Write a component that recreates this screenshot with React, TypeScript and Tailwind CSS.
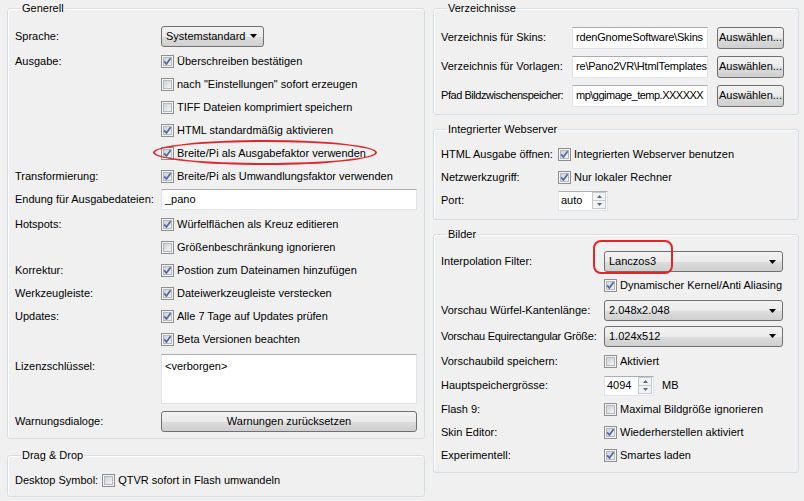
import type { ReactNode } from "react";

// Win7-style settings dialog (Pano2VR preferences)

function CheckBox({ checked }: { checked: boolean }) {
  return (
    <svg width="13" height="13" viewBox="0 0 13 13" className="shrink-0">
      <defs>
        <linearGradient id="cbInner" x1="0" y1="0" x2="1" y2="1">
          <stop offset="0" stopColor="#cbcfd5" />
          <stop offset="1" stopColor="#f7f7f7" />
        </linearGradient>
      </defs>
      <rect x="0.5" y="0.5" width="12" height="12" fill="#f4f4f4" stroke="#8e8f8f" />
      <rect x="2.5" y="2.5" width="8" height="8" fill="url(#cbInner)" stroke="#b4b7bb" strokeWidth="1" />
      {checked && (
        <path d="M3.2 6.4 L5.4 9 L9.6 3.2" fill="none" stroke="#5066a0" strokeWidth="1.7" strokeLinejoin="round" />
      )}
    </svg>
  );
}

function Check({ checked, label }: { checked: boolean; label: string }) {
  return (
    <div className="flex items-center gap-[3px] whitespace-nowrap">
      <CheckBox checked={checked} />
      <span>{label}</span>
    </div>
  );
}

function Arrow() {
  return (
    <svg width="7" height="4" viewBox="0 0 7 4" className="shrink-0">
      <path d="M0 0 H7 L3.5 4 Z" fill="#000" />
    </svg>
  );
}

function Combo({ value, className }: { value: string; className: string }) {
  return (
    <div
      className={`flex items-center justify-between rounded-[3px] border border-[#707070] bg-[linear-gradient(#f2f2f2_0%,#ebebeb_50%,#dddddd_51%,#cfcfcf_100%)] pl-[4px] pr-[6px] ${className}`}
    >
      <span>{value}</span>
      <Arrow />
    </div>
  );
}

function Button({ label, className }: { label: string; className: string }) {
  return (
    <div
      className={`flex items-center justify-center rounded-[3px] border border-[#707070] bg-[linear-gradient(#f2f2f2_0%,#ebebeb_50%,#dddddd_51%,#cfcfcf_100%)] ${className}`}
    >
      {label}
    </div>
  );
}

function SpinBox({ value, className }: { value: string; className: string }) {
  return (
    <div className={`flex items-center border border-[#e2e3ea] border-t-[#abadb3] bg-white ${className}`}>
      <span className="flex-1 pl-[2px]">{value}</span>
      <div className="mr-[1px] flex h-[17px] w-[14px] flex-col border border-[#c5c8cd] bg-[#f3f3f3]">
        <div className="flex flex-1 items-center justify-center">
          <svg width="5" height="3" viewBox="0 0 5 3">
            <path d="M0 3 L2.5 0 L5 3 Z" fill="#53698c" />
          </svg>
        </div>
        <div className="h-px bg-[#c5c8cd]" />
        <div className="flex flex-1 items-center justify-center">
          <svg width="5" height="3" viewBox="0 0 5 3">
            <path d="M0 0 L2.5 3 L5 0 Z" fill="#53698c" />
          </svg>
        </div>
      </div>
    </div>
  );
}

// path fields show only the scrolled-to tail of the path
function TextField({ value, className }: { value: string; className: string }) {
  return (
    <div
      className={`flex items-center whitespace-nowrap border border-[#e2e3ea] border-t-[#abadb3] bg-white pl-[3px] ${className}`}
    >
      {value}
    </div>
  );
}

function Group({ title, className, children }: { title: string; className: string; children: ReactNode }) {
  return (
    <fieldset className={`rounded-[3px] border border-[#d5dfe5] px-[7px] shadow-[inset_1px_1px_0_#fff] ${className}`}>
      <legend className="ml-[6px] px-[1px] leading-[13px]">{title}</legend>
      {children}
    </fieldset>
  );
}

function Row({
  label,
  lw,
  h,
  children,
  className = "",
  labelClass = "",
}: {
  label?: string;
  lw: number;
  h: string;
  children?: ReactNode;
  className?: string;
  labelClass?: string;
}) {
  return (
    <div className={`flex items-center ${h} ${className}`}>
      <div className={`shrink-0 whitespace-nowrap ${labelClass}`} style={{ width: lw }}>
        {label}
      </div>
      {children}
    </div>
  );
}

export default function App() {
  const L = 146;
  return (
    <div className="relative flex h-[501px] w-[804px] gap-[8px] overflow-hidden bg-[#f0f0f0] pl-[7px] pt-[2px] font-['Liberation_Sans',Arial,sans-serif] text-[11px] text-black">
      {/* left column */}
      <div className="flex w-[418px] flex-col">
        <Group title="Generell" className="h-[437px] pt-[10px]">
          <Row label="Sprache:" lw={L} h="h-[22px]">
            <Combo value="Systemstandard" className="h-[21px] w-[103px]" />
          </Row>
          <Row label="Ausgabe:" lw={L} h="h-[23px]" className="mt-[3px]">
            <Check checked label="Überschreiben bestätigen" />
          </Row>
          <Row lw={L} h="h-[23px]">
            <Check checked={false} label={'nach "Einstellungen" sofort erzeugen'} />
          </Row>
          <Row lw={L} h="h-[23px]">
            <Check checked={false} label="TIFF Dateien komprimiert speichern" />
          </Row>
          <Row lw={L} h="h-[23px]">
            <Check checked label="HTML standardmäßig aktivieren" />
          </Row>
          <Row lw={L} h="h-[23px]">
            <Check checked label="Breite/Pi als Ausgabefaktor verwenden" />
          </Row>
          <Row label="Transformierung:" lw={L} h="h-[23px]">
            <Check checked label="Breite/Pi als Umwandlungsfaktor verwenden" />
          </Row>
          <Row label="Endung für Ausgabedateien:" lw={L} h="h-[23px]">
            <div className="flex h-[21px] flex-1 items-center border border-[#e2e3ea] border-t-[#abadb3] bg-white pl-[3px]">
              _pano
            </div>
          </Row>
          <Row label="Hotspots:" lw={L} h="h-[23px]" className="mt-[2px]">
            <Check checked label="Würfelflächen als Kreuz editieren" />
          </Row>
          <Row lw={L} h="h-[23px]">
            <Check checked={false} label="Größenbeschränkung ignorieren" />
          </Row>
          <Row label="Korrektur:" lw={L} h="h-[23px]">
            <Check checked label="Postion zum Dateinamen hinzufügen" />
          </Row>
          <Row label="Werkzeugleiste:" lw={L} h="h-[23px]">
            <Check checked label="Dateiwerkzeugleiste verstecken" />
          </Row>
          <Row label="Updates:" lw={L} h="h-[23px]">
            <Check checked label="Alle 7 Tage auf Updates prüfen" />
          </Row>
          <Row lw={L} h="h-[23px]">
            <Check checked label="Beta Versionen beachten" />
          </Row>
          <div className="mt-[3px] flex">
            <div className="w-[146px] shrink-0 pt-[4px]">Lizenzschlüssel:</div>
            <div className="h-[50px] flex-1 border border-[#e2e3ea] border-t-[#abadb3] bg-white px-[3px] pt-[3px]">
              &lt;verborgen&gt;
            </div>
          </div>
          <Row label="Warnungsdialoge:" lw={L} h="h-[21px]" className="mt-[7px]">
            <Button label="Warnungen zurücksetzen" className="h-[21px] flex-1" />
          </Row>
        </Group>
        <Group title="Drag & Drop" className="mt-[10px] h-[48px] pt-[7px]">
          <div className="flex h-[23px] items-center gap-[4px]">
            <span>Desktop Symbol:</span>
            <Check checked={false} label="QTVR sofort in Flash umwandeln" />
          </div>
        </Group>
      </div>

      {/* right column */}
      <div className="flex w-[366px] flex-col">
        <Group title="Verzeichnisse" className="h-[113px] pt-[8px]">
          <Row label="Verzeichnis für Skins:" lw={131} h="h-[29px]">
            <TextField value="rdenGnomeSoftware\Skins" className="h-[22px] w-[136px] tracking-[-0.2px]" />
            <Button label="Auswählen..." className="ml-[9px] h-[22px] w-[67px]" />
          </Row>
          <Row label="Verzeichnis für Vorlagen:" lw={131} h="h-[29px]">
            <TextField value="re\Pano2VR\HtmlTemplates" className="h-[22px] w-[136px] tracking-[-0.2px]" />
            <Button label="Auswählen..." className="ml-[9px] h-[22px] w-[67px]" />
          </Row>
          <Row label="Pfad Bildzwischenspeicher:" lw={131} h="h-[29px]" labelClass="tracking-[-0.45px]">
            <TextField value="mp\ggimage_temp.XXXXXX" className="h-[22px] w-[136px] tracking-[-0.5px]" />
            <Button label="Auswählen..." className="ml-[9px] h-[22px] w-[67px]" />
          </Row>
        </Group>
        <Group title="Integrierter Webserver" className="mt-[8px] h-[97px] pt-[7px]">
          <Row label="HTML Ausgabe öffnen:" lw={117} h="h-[23px]">
            <Check checked label="Integrierten Webserver benutzen" />
          </Row>
          <Row label="Netzwerkzugriff:" lw={117} h="h-[23px]">
            <Check checked label="Nur lokaler Rechner" />
          </Row>
          <Row label="Port:" lw={117} h="h-[23px]">
            <SpinBox value="auto" className="h-[20px] w-[50px]" />
          </Row>
        </Group>
        <Group title="Bilder" className="mt-[8px] h-[245px] pt-[9px]">
          <Row label="Interpolation Filter:" lw={163} h="h-[23px]">
            <Combo value="Lanczos3" className="h-[21px] w-[179px]" />
          </Row>
          <Row lw={163} h="h-[25px]">
            <Check checked label="Dynamischer Kernel/Anti Aliasing" />
          </Row>
          <Row label="Vorschau Würfel-Kantenlänge:" lw={163} h="h-[25px]">
            <Combo value="2.048x2.048" className="h-[21px] w-[179px]" />
          </Row>
          <Row label="Vorschau Equirectangular Größe:" lw={163} h="h-[26px]" labelClass="tracking-[-0.25px]">
            <Combo value="1.024x512" className="h-[21px] w-[179px]" />
          </Row>
          <Row label="Vorschaubild speichern:" lw={163} h="h-[24px]">
            <Check checked={false} label="Aktiviert" />
          </Row>
          <Row label="Hauptspeichergrösse:" lw={163} h="h-[25px]">
            <SpinBox value="4094" className="h-[20px] w-[50px]" />
            <span className="ml-[8px]">MB</span>
          </Row>
          <Row label="Flash 9:" lw={163} h="h-[23px]">
            <Check checked={false} label="Maximal Bildgröße ignorieren" />
          </Row>
          <Row label="Skin Editor:" lw={163} h="h-[23px]">
            <Check checked label="Wiederherstellen aktiviert" />
          </Row>
          <Row label="Experimentell:" lw={163} h="h-[23px]">
            <Check checked label="Smartes laden" />
          </Row>
        </Group>
      </div>

      {/* red annotations */}
      <div className="pointer-events-none absolute left-[153px] top-[140px] h-[25px] w-[224px] rounded-[50%] border-2 border-[#e0262c]" />
      <div className="pointer-events-none absolute left-[593px] top-[240px] h-[34px] w-[80px] rounded-[8px] border-2 border-[#e0262c]" />
    </div>
  );
}
